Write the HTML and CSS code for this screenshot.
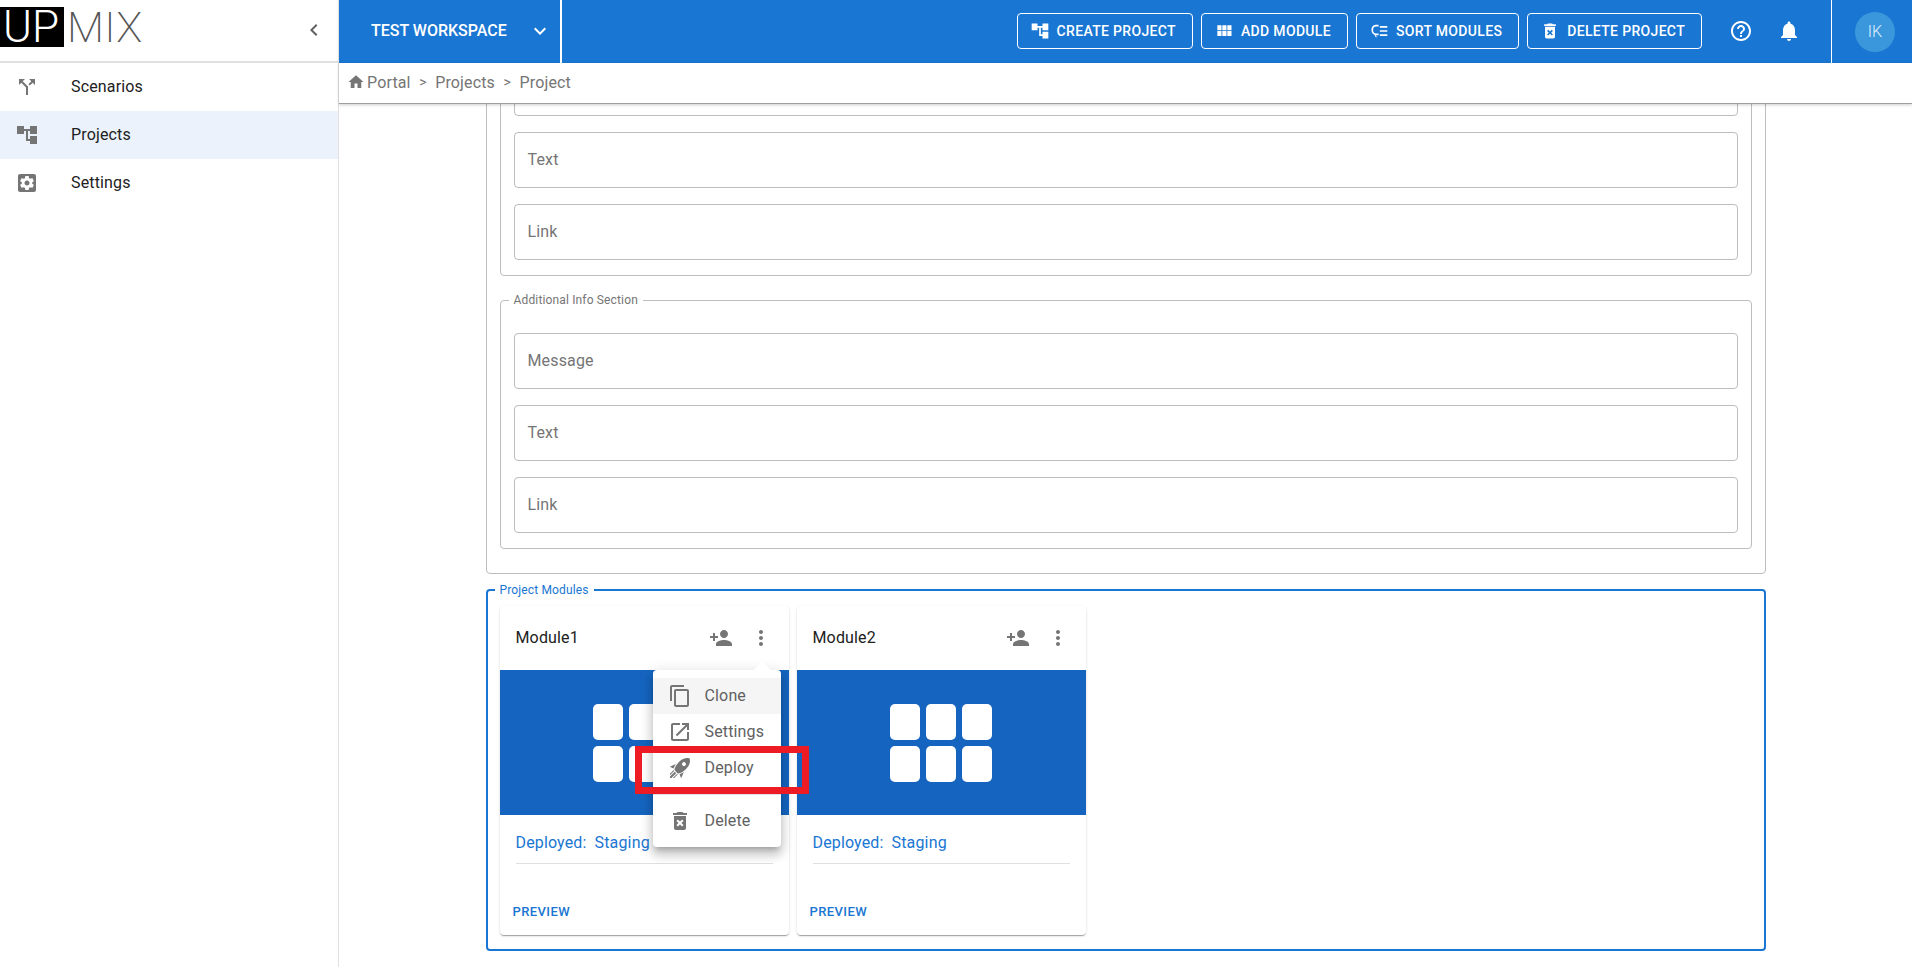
FILE: index.html
```html
<!DOCTYPE html>
<html lang="en">
<head>
<meta charset="utf-8">
<title>Project</title>
<link rel="stylesheet" href="styles.css">
</head>
<body>
<svg class="sprite" xmlns="http://www.w3.org/2000/svg">
  <symbol id="i-home" viewBox="0 0 24 24"><path d="M10 20v-6h4v6h5v-8h3L12 3 2 12h3v8z"/></symbol>
  <symbol id="i-split" viewBox="0 0 24 24"><path d="M14 4l2.29 2.29-2.88 2.88 1.42 1.42 2.88-2.88L20 10V4zm-4 0H4v6l2.29-2.29 4.71 4.7V20h2v-8.41l-5.29-5.3z"/></symbol>
  <symbol id="i-tree" viewBox="0 0 24 24"><path d="M22 11V3h-7v3H9V3H2v8h7V8h2v10h4v3h7v-8h-7v3h-2V8h2v3z"/></symbol>
  <symbol id="i-settings" viewBox="0 0 24 24"><path d="M12 9.5c-1.38 0-2.5 1.12-2.5 2.5s1.12 2.5 2.5 2.5 2.5-1.12 2.5-2.5-1.12-2.5-2.5-2.5z"/><path d="M19 3H5c-1.11 0-2 .9-2 2v14c0 1.1.89 2 2 2h14c1.11 0 2-.9 2-2V5c0-1.1-.89-2-2-2zm-1.75 9c0 .23-.02.46-.05.68l1.48 1.16c.13.11.17.3.08.45l-1.4 2.42c-.09.15-.27.21-.43.15l-1.74-.7c-.36.28-.76.51-1.18.69l-.26 1.85c-.03.17-.18.3-.35.3h-2.8c-.17 0-.32-.13-.35-.29l-.26-1.85c-.43-.18-.82-.41-1.18-.69l-1.74.7c-.16.06-.34 0-.43-.15l-1.4-2.42c-.09-.15-.05-.34.08-.45l1.48-1.16c-.03-.23-.05-.46-.05-.69 0-.23.02-.46.05-.68l-1.48-1.16c-.13-.11-.17-.3-.08-.45l1.4-2.42c.09-.15.27-.21.43-.15l1.74.7c.36-.28.76-.51 1.18-.69l.26-1.85c.03-.17.18-.3.35-.3h2.8c.17 0 .32.13.35.29l.26 1.85c.43.18.82.41 1.18.69l1.74-.7c.16-.06.34 0 .43.15l1.4 2.42c.09.15.05.34-.08.45l-1.48 1.16c.03.23.05.46.05.69z"/></symbol>
  <symbol id="i-left" viewBox="0 0 24 24"><path d="M15.41 7.41L14 6l-6 6 6 6 1.41-1.41L10.83 12z"/></symbol>
  <symbol id="i-down" viewBox="0 0 24 24"><path d="M16.59 8.59L12 13.17 7.41 8.59 6 10l6 6 6-6z"/></symbol>
  <symbol id="i-module" viewBox="0 0 24 24"><path d="M4 11h5V5H4v6zm0 7h5v-6H4v6zm6 0h5v-6h-5v6zm6 0h5v-6h-5v6zm-6-7h5V5h-5v6zm6-6v6h5V5h-5z"/></symbol>
  <symbol id="i-delete" viewBox="0 0 24 24"><path d="M6 19c0 1.1.9 2 2 2h8c1.1 0 2-.9 2-2V7H6v12zm2.46-7.12l1.41-1.41L12 12.59l2.12-2.12 1.41 1.41L13.41 14l2.12 2.12-1.41 1.41L12 15.41l-2.12 2.12-1.41-1.41L10.59 14l-2.13-2.12zM15.5 4l-1-1h-5l-1 1H5v2h14V4z"/></symbol>
  <symbol id="i-help" viewBox="0 0 24 24"><path d="M11 18h2v-2h-2v2zm1-16C6.48 2 2 6.48 2 12s4.48 10 10 10 10-4.48 10-10S17.52 2 12 2zm0 18c-4.41 0-8-3.59-8-8s3.59-8 8-8 8 3.59 8 8-3.59 8-8 8zm0-14c-2.21 0-4 1.79-4 4h2c0-1.1.9-2 2-2s2 .9 2 2c0 2-3 1.75-3 5h2c0-2.25 3-2.5 3-5 0-2.21-1.79-4-4-4z"/></symbol>
  <symbol id="i-bell" viewBox="0 0 24 24"><path d="M12 22c1.1 0 2-.9 2-2h-4c0 1.1.89 2 2 2zm6-6v-5c0-3.07-1.64-5.64-4.5-6.32V4c0-.83-.67-1.5-1.5-1.5s-1.5.67-1.5 1.5v.68C7.63 5.36 6 7.92 6 11v5l-2 2v1h16v-1l-2-2z"/></symbol>
  <symbol id="i-person" viewBox="0 0 24 24"><path d="M15 12c2.21 0 4-1.79 4-4s-1.79-4-4-4-4 1.79-4 4 1.79 4 4 4zm-9-2V7H4v3H1v2h3v3h2v-3h3v-2H6zm9 4c-2.67 0-8 1.34-8 4v2h16v-2c0-2.66-5.33-4-8-4z"/></symbol>
  <symbol id="i-more" viewBox="0 0 24 24"><path d="M12 8c1.1 0 2-.9 2-2s-.9-2-2-2-2 .9-2 2 .9 2 2 2zm0 2c-1.1 0-2 .9-2 2s.9 2 2 2 2-.9 2-2-.9-2-2-2zm0 6c-1.1 0-2 .9-2 2s.9 2 2 2 2-.9 2-2-.9-2-2-2z"/></symbol>
  <symbol id="i-copy" viewBox="0 0 24 24"><path d="M16 1H4c-1.1 0-2 .9-2 2v14h2V3h12V1zm3 4H8c-1.1 0-2 .9-2 2v14c0 1.1.9 2 2 2h11c1.1 0 2-.9 2-2V7c0-1.1-.9-2-2-2zm0 16H8V7h11v14z"/></symbol>
  <symbol id="i-open" viewBox="0 0 24 24"><path d="M19 19H5V5h7V3H5c-1.11 0-2 .9-2 2v14c0 1.1.89 2 2 2h14c1.1 0 2-.9 2-2v-7h-2v7zM14 3v2h3.59l-9.83 9.83 1.41 1.41L19 6.41V10h2V3h-7z"/></symbol>
  <symbol id="i-rocket" viewBox="0 0 24 24"><path d="M13.13 22.19L11.5 18.36C13.07 17.78 14.54 17 15.9 16.09L13.13 22.19M5.64 12.5L1.81 10.87L7.91 8.1C7 9.46 6.22 10.93 5.64 12.5M21.61 2.39C21.61 2.39 16.66 .269 11 5.93C8.81 8.12 7.5 10.53 6.65 12.64C6.37 13.39 6.56 14.21 7.11 14.77L9.24 16.89C9.79 17.45 10.61 17.63 11.36 17.35C13.5 16.53 15.88 15.19 18.07 13C23.73 7.34 21.61 2.39 21.61 2.39M14.54 9.46C13.76 8.68 13.76 7.41 14.54 6.63S16.59 5.85 17.37 6.63C18.14 7.41 18.15 8.68 17.37 9.46C16.59 10.24 15.32 10.24 14.54 9.46M6.24 22L9.88 18.36C9.54 18.27 9.21 18.12 8.91 17.91L4.83 22H6.24M2 22H3.41L8.18 17.24L6.76 15.83L2 20.59V22M2 19.17L6.09 15.09C5.88 14.79 5.73 14.47 5.64 14.12L2 17.76V19.17Z"/></symbol>
  <symbol id="i-sort" viewBox="0 0 24 24"><path class="stroke" d="M11.5 5.5H8.5A4.5 4.5 0 0 0 4 10v1.5a4.5 4.5 0 0 0 4.5 4.5h3"/><path d="M7 15.5v3.5l2 2v-2l-1-1z" transform="translate(0 -1)"/><path d="M13 6h9v2h-9zM13 11h9v2h-9zM13 16h9v2h-9z"/></symbol>
</svg>

<div class="app">
  <aside class="sidebar">
    <div class="brand">
      <div class="logo"><span class="logo-up">UP</span><span class="logo-mix">MIX</span></div>
      <svg class="ico collapse"><use href="#i-left"/></svg>
    </div>
    <nav class="nav">
      <a class="nav-item"><svg class="ico"><use href="#i-split"/></svg><span>Scenarios</span></a>
      <a class="nav-item active"><svg class="ico"><use href="#i-tree"/></svg><span>Projects</span></a>
      <a class="nav-item"><svg class="ico"><use href="#i-settings"/></svg><span>Settings</span></a>
    </nav>
  </aside>

  <div class="workspace">
    <header class="topbar">
      <div class="ws-select"><span>TEST WORKSPACE</span><svg class="ico"><use href="#i-down"/></svg></div>
      <div class="actions">
        <button class="btn"><svg class="btn-ico"><use href="#i-tree"/></svg>CREATE PROJECT</button>
        <button class="btn"><svg class="btn-ico"><use href="#i-module"/></svg>ADD MODULE</button>
        <button class="btn"><svg class="btn-ico"><use href="#i-sort"/></svg>SORT MODULES</button>
        <button class="btn"><svg class="btn-ico"><use href="#i-delete"/></svg>DELETE PROJECT</button>
      </div>
      <div class="tools">
        <span class="tool"><svg class="ico"><use href="#i-help"/></svg></span>
        <span class="tool"><svg class="ico"><use href="#i-bell"/></svg></span>
      </div>
      <div class="user"><span class="avatar">IK</span></div>
    </header>

    <div class="crumbs">
      <svg class="crumb-home"><use href="#i-home"/></svg>
      <span>Portal</span><span class="sep">&gt;</span><span>Projects</span><span class="sep">&gt;</span><span>Project</span>
    </div>

    <main class="content">
      <div class="page">
        <div class="panel">
          <fieldset class="group">
            <div class="field"></div>
            <div class="field"><span>Text</span></div>
            <div class="field"><span>Link</span></div>
          </fieldset>
          <fieldset class="group">
            <legend>Additional Info Section</legend>
            <div class="field"><span>Message</span></div>
            <div class="field"><span>Text</span></div>
            <div class="field"><span>Link</span></div>
          </fieldset>
        </div>

        <fieldset class="modules">
          <legend>Project Modules</legend>
          <div class="cards">
            <article class="card">
              <div class="card-head">
                <span class="card-title">Module1</span>
                <svg class="ico"><use href="#i-person"/></svg>
                <svg class="ico"><use href="#i-more"/></svg>
              </div>
              <div class="card-media">
                <div class="tiles"><i></i><i></i><i></i><i></i><i></i><i></i></div>
              </div>
              <div class="card-status"><span>Deployed:</span><span>Staging</span></div>
              <div class="card-foot">PREVIEW</div>
              <div class="menu">
                <div class="menu-item hover"><svg class="ico"><use href="#i-copy"/></svg><span>Clone</span></div>
                <div class="menu-item"><svg class="ico"><use href="#i-open"/></svg><span>Settings</span></div>
                <div class="menu-item"><svg class="ico"><use href="#i-rocket"/></svg><span>Deploy</span></div>
                <hr class="menu-rule">
                <div class="menu-item"><svg class="ico"><use href="#i-delete"/></svg><span>Delete</span></div>
              </div>
              <div class="callout"></div>
            </article>
            <article class="card">
              <div class="card-head">
                <span class="card-title">Module2</span>
                <svg class="ico"><use href="#i-person"/></svg>
                <svg class="ico"><use href="#i-more"/></svg>
              </div>
              <div class="card-media">
                <div class="tiles"><i></i><i></i><i></i><i></i><i></i><i></i></div>
              </div>
              <div class="card-status"><span>Deployed:</span><span>Staging</span></div>
              <div class="card-foot">PREVIEW</div>
            </article>
          </div>
        </fieldset>
      </div>
    </main>
  </div>
</div>
</body>
</html>
```
FILE: styles.css
```css
* { box-sizing: border-box; }
html, body { margin: 0; height: 100%; overflow: hidden; }
body { font-family: Roboto, "Liberation Sans", sans-serif; font-size: 16px; letter-spacing: .15px; color: #212121; background: #fff; }
.sprite { display: none; }
.stroke { fill: none; stroke: currentColor; stroke-width: 2; }

.ico { width: 24px; height: 24px; fill: #757575; flex: none; display: block; }

.app { display: flex; height: 967px; }

.sidebar { width: 339px; flex: none; border-right: 1px solid #e0e0e0; background: #fff; }
.brand { height: 63px; border-bottom: 2px solid #e0e0e0; display: flex; align-items: center; justify-content: space-between; padding: 0 12px 0 0; }
.logo { display: flex; align-items: center; height: 40px; margin-top: -8px; line-height: 40px; font-size: 44px; letter-spacing: 0; }
.logo-up { display: block; width: 64px; height: 40px; background: #000; color: #fff; font-weight: 300; padding-left: 3px; }
.logo-mix { color: #555; font-size: 43px; font-weight: 200; margin-left: 3px; letter-spacing: .3px; }
.collapse { fill: #616161; margin-top: -1px; }

.nav-item { display: flex; align-items: center; height: 48px; padding-left: 15px; gap: 32px; color: #212121; }
.nav-item span { padding-bottom: 2px; }
.nav-item.active { background: #ebf2fb; }

.workspace { flex: 1; min-width: 0; display: flex; flex-direction: column; }

.topbar { height: 63px; flex: none; background: #1976d2; color: #fff; display: flex; align-items: center; padding-bottom: 1px; }
.topbar .ico { fill: #fff; }
.ws-select { width: 223px; height: 63px; margin-bottom: -1px; border-right: 2px solid #fff; padding: 0 8px 2px 32px; display: flex; align-items: center; justify-content: space-between; font-weight: 500; font-size: 16px; letter-spacing: 0; }
.actions { margin-left: auto; display: flex; gap: 8px; }
.btn { height: 36px; border: 1px solid #fff; border-radius: 4px; background: transparent; color: #fff; font: 500 14px Roboto, sans-serif; letter-spacing: .33px; display: flex; align-items: center; padding: 0 16px 0 12px; }
.btn-ico { width: 20px; height: 20px; fill: #fff; color: #fff; margin-right: 7px; flex: none; }
.tools { display: flex; margin-left: 15px; }
.tool { width: 48px; height: 48px; display: flex; align-items: center; justify-content: center; }
.user { width: 81px; height: 63px; margin: 0 0 -1px 18px; border-left: 1px solid #fff; display: flex; align-items: center; padding-left: 23px; }
.avatar { width: 40px; height: 40px; border-radius: 50%; background: #3a97dc; color: #e3f2fd; font-size: 16px; font-weight: 300; display: flex; align-items: center; justify-content: center; }

.crumbs { height: 41px; flex: none; background: #fff; border-bottom: 1px solid #9e9e9e; box-shadow: 0 1px 3px rgba(0,0,0,.2); display: flex; align-items: center; padding: 0 0 2px 8px; color: #757575; position: relative; z-index: 2; }
.crumb-home { width: 18px; height: 18px; fill: #757575; margin-right: 2px; }
.sep { margin: 0 8.5px; font-size: 14px; }

.content { flex: 1; min-height: 0; overflow: hidden; display: flex; flex-direction: column; justify-content: flex-end; align-items: center; padding-bottom: 16px; }
.page { width: 1280px; flex: none; }

.panel { border: 1px solid #bdbdbd; border-radius: 4px; padding: 0 13px 24px 13px; }
.group { margin: 0; min-width: 0; border: 1px solid #bdbdbd; border-radius: 4px; padding: 25px 13px 15px; color: #757575; }
.group + .group { margin-top: 16px; padding-top: 25px; }
.group legend { font-size: 12px; line-height: 16px; padding: 0 5px; margin-left: -5px; color: #757575; }
.field { height: 56px; border: 1px solid #bdbdbd; border-radius: 4px; padding-left: 13px; display: flex; align-items: center; color: #757575; }
.field span { padding-bottom: 2px; }
.field + .field { margin-top: 16px; }

.modules { margin: 8px 0 0; min-width: 0; border: 2px solid #1976d2; border-radius: 4px; padding: 8px 12px 14px; }
.modules legend { font-size: 12px; line-height: 16px; padding: 0 5px; margin-left: -5px; color: #1976d2; }
.cards { display: flex; gap: 8px; }

.card { width: 289px; height: 329px; background: #fff; border-radius: 4px; position: relative; box-shadow: 0 2px 1px -1px rgba(0,0,0,.2), 0 1px 1px 0 rgba(0,0,0,.14), 0 1px 3px 0 rgba(0,0,0,.12); display: flex; flex-direction: column; }
.card-head { height: 64px; display: flex; align-items: center; gap: 16px; padding: 0 16px; }
.card-title { flex: 1; color: #212121; padding-bottom: 2px; }
.card-media { height: 145px; background: #1565c0; display: flex; align-items: center; justify-content: center; }
.tiles { display: grid; grid-template-columns: repeat(3, 30px); grid-template-rows: repeat(2, 36px); gap: 6px; }
.tiles i { background: #fff; border-radius: 5px; }
.card-status { height: 49px; margin: 0 16px; padding-top: 6px; border-bottom: 1px solid #e0e0e0; display: flex; align-items: center; gap: 8px; color: #1976d2; }
.card-foot { margin-top: auto; height: 71px; padding: 38px 0 0 13px; font-size: 13px; font-weight: 500; line-height: 20px; letter-spacing: .4px; color: #1976d2; }

.menu { position: absolute; left: 153px; top: 64px; width: 128px; height: 177px; padding-top: 8px; background: #fff; border-radius: 4px; box-shadow: 0 5px 5px -3px rgba(0,0,0,.2), 0 8px 10px 1px rgba(0,0,0,.14), 0 3px 14px 2px rgba(0,0,0,.12); z-index: 3; }
.menu::before { content: ""; position: absolute; left: 103px; top: -6px; width: 12px; height: 12px; background: #fff; transform: rotate(45deg); }
.menu-item { height: 36px; display: flex; align-items: center; gap: 13px; padding-left: 15px; color: #616161; position: relative; }
.menu-item span { padding-bottom: 2px; }
.menu-item.hover { background: #f5f5f5; }
.menu-rule { margin: 8px 0; border: 0; border-top: 1px solid #e0e0e0; }
.callout { position: absolute; left: 135px; top: 140px; width: 174px; height: 48px; border: 7px solid #ed1c24; z-index: 4; }
```
